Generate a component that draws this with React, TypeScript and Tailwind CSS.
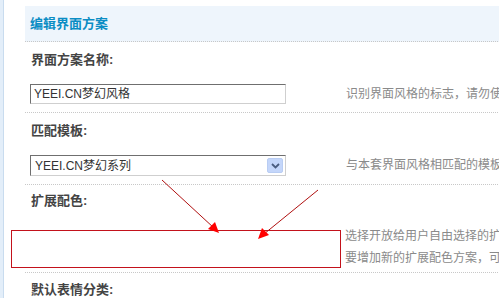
export default function App() {
  return (
    <div className="relative flex h-[298px] w-[499px] overflow-hidden bg-white font-['Liberation_Sans','Noto_Sans_CJK_SC',sans-serif]">
      <div className="w-[4px] shrink-0 border-r border-[#c9dcef] bg-[#e3eef9]" />

      <div className="ml-[21px] flex-1 pt-[6px]">
        <div className="flex h-[36px] items-center border-b border-dotted border-[#c8c8c8] bg-[#eef5fc] pl-[5px]">
          <span className="text-[13px] font-bold text-[#0b8dc4]">编辑界面方案</span>
        </div>

        <Section label="界面方案名称:" labelH="h-[36px]" rowH="h-[34px]">
          <div className="flex h-[20px] w-[256px] items-center border border-t-[#6f6f6f] border-l-[#6f6f6f] border-r-[#cfcfcf] border-b-[#cfcfcf] pl-[3px] text-[12px] text-[#333]">
            YEEI.CN梦幻风格
          </div>
          <Desc>识别界面风格的标志，请勿使用特殊字符</Desc>
        </Section>

        <Section label="匹配模板:" labelH="h-[36px]" rowH="h-[35px]">
          <div className="flex h-[21px] w-[256px] items-center justify-between border border-t-[#6f6f6f] border-l-[#6f6f6f] border-r-[#cfcfcf] border-b-[#cfcfcf] pl-[4px] pr-[2px] text-[12px] text-[#333]">
            <span>YEEI.CN梦幻系列</span>
            <span className="flex h-[15px] w-[16px] items-center justify-center rounded-[2px] border border-[#b9cdf3] bg-[#c4d6fa]">
              <svg width="9" height="6" viewBox="0 0 9 6">
                <path d="M1 1 L4.5 4.5 L8 1" fill="none" stroke="#4a5d80" strokeWidth="1.8" />
              </svg>
            </span>
          </div>
          <Desc>与本套界面风格相匹配的模板</Desc>
        </Section>

        <div className="border-b border-dotted border-[#c8c8c8]">
          <div className="flex h-[32px] items-center pl-[6px] text-[13px] font-bold text-[#444]">扩展配色:</div>
          <div className="h-[55px] pl-[320px] pt-[8px] text-[12px] leading-[22px] text-[#8a8a8a]">
            <div className="whitespace-nowrap">选择开放给用户自由选择的扩展配色</div>
            <div className="whitespace-nowrap">要增加新的扩展配色方案，可在此添加</div>
          </div>
        </div>

        <div className="flex h-[34px] items-center pl-[6px] text-[13px] font-bold text-[#444]">默认表情分类:</div>
      </div>

      <div className="absolute left-[11px] top-[230px] h-[38px] w-[330px] border border-[#c3121b]" />

      <svg className="pointer-events-none absolute left-0 top-0" width="499" height="298">
        <line x1="162" y1="180" x2="214" y2="228" stroke="#b01010" strokeWidth="1" />
        <polygon points="219,233 208,229 215,222" fill="#ff0000" />
        <line x1="318" y1="190" x2="264" y2="234" stroke="#b01010" strokeWidth="1" />
        <polygon points="258,239 262,228 269,235" fill="#ff0000" />
      </svg>
    </div>
  );
}

function Section({
  label,
  labelH,
  rowH,
  children,
}: {
  label: string;
  labelH: string;
  rowH: string;
  children: React.ReactNode;
}) {
  return (
    <div className="border-b border-dotted border-[#c8c8c8]">
      <div className={`flex ${labelH} items-center pl-[6px] text-[13px] font-bold text-[#444]`}>{label}</div>
      <div className={`flex ${rowH} items-start pl-[5px] pt-[6px]`}>{children}</div>
    </div>
  );
}

function Desc({ children }: { children: React.ReactNode }) {
  return (
    <div className="ml-[60px] flex h-[20px] items-center whitespace-nowrap text-[12px] text-[#8a8a8a]">{children}</div>
  );
}
